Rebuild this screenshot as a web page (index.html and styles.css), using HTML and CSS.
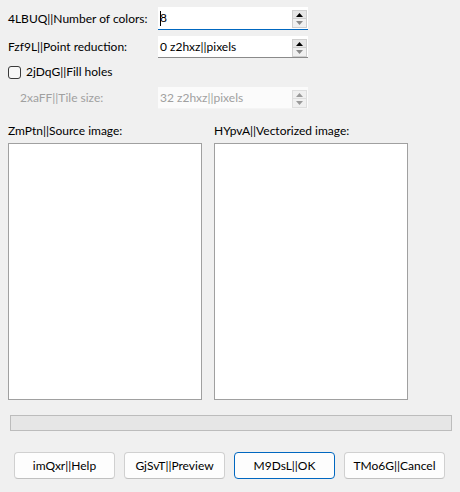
FILE: index.html
```html
<!DOCTYPE html>
<html>
<head>
<meta charset="utf-8">
<link rel="stylesheet" href="styles.css">
</head>
<body>
<div class="dialog">
  <div class="form">
    <div class="row r1">
      <span class="label">4LBUQ||Number of colors:</span>
      <div class="spin focused">
        <span class="value"><span class="caret"></span>8</span>
        <div class="arrows">
          <span class="btn up"><svg width="7" height="4" viewBox="0 0 7 4"><path d="M0 4 L3.5 0 L7 4 Z" fill="#000"/></svg></span>
          <span class="btn down"><svg width="7" height="4" viewBox="0 0 7 4"><path d="M0 0 L3.5 4 L7 0 Z" fill="#8a8a8a"/></svg></span>
        </div>
      </div>
    </div>
    <div class="row r2">
      <span class="label">Fzf9L||Point reduction:</span>
      <div class="spin">
        <span class="value">0 z2hxz||pixels</span>
        <div class="arrows">
          <span class="btn up"><svg width="7" height="4" viewBox="0 0 7 4"><path d="M0 4 L3.5 0 L7 4 Z" fill="#000"/></svg></span>
          <span class="btn down"><svg width="7" height="4" viewBox="0 0 7 4"><path d="M0 0 L3.5 4 L7 0 Z" fill="#8a8a8a"/></svg></span>
        </div>
      </div>
    </div>
    <div class="check-row">
      <span class="checkbox"></span>
      <span class="check-label">2jDqG||Fill holes</span>
    </div>
    <div class="row r4 disabled">
      <span class="label indent">2xaFF||Tile size:</span>
      <div class="spin">
        <span class="value">32 z2hxz||pixels</span>
        <div class="arrows">
          <span class="btn up"><svg width="7" height="4" viewBox="0 0 7 4"><path d="M0 4 L3.5 0 L7 4 Z" fill="#9a9a9a"/></svg></span>
          <span class="btn down"><svg width="7" height="4" viewBox="0 0 7 4"><path d="M0 0 L3.5 4 L7 0 Z" fill="#9a9a9a"/></svg></span>
        </div>
      </div>
    </div>
  </div>

  <div class="images">
    <div class="pane">
      <div class="pane-label">ZmPtn||Source image:</div>
      <div class="canvas"></div>
    </div>
    <div class="pane">
      <div class="pane-label">HYpvA||Vectorized image:</div>
      <div class="canvas"></div>
    </div>
  </div>

  <div class="progress"></div>

  <div class="buttons">
    <button class="pbtn">imQxr||Help</button>
    <button class="pbtn">GjSvT||Preview</button>
    <button class="pbtn default">M9DsL||OK</button>
    <button class="pbtn">TMo6G||Cancel</button>
  </div>
</div>
</body>
</html>
```

FILE: styles.css
```css
html, body {
  margin: 0;
  padding: 0;
  background: #f0f0f0;
}
body {
  width: 460px;
  height: 492px;
  font-family: Lato, "Open Sans", "DejaVu Sans", sans-serif;
  font-size: 12px;
  color: #000;
  overflow: hidden;
  white-space: nowrap;
}
.dialog {
  display: flex;
  flex-direction: column;
  padding-top: 7px;
}
.form {
  display: flex;
  flex-direction: column;
  padding-left: 8px;
}
.row {
  display: flex;
  align-items: center;
  height: 23px;
}
.r2 { margin-top: 6px; height: 22px; }
.r4 { margin-top: 7px; height: 22px; }
.label {
  flex-shrink: 0;
  width: 150px;
  line-height: 16px;
}
.label.indent {
  padding-left: 12px;
  width: 138px;
}
.disabled .label { color: #a0a0a0; }
.spin {
  flex-shrink: 0;
  width: 150px;
  height: 100%;
  box-sizing: border-box;
  background: #fff;
  border-bottom: 1px solid #8a8a8a;
  display: flex;
  align-items: center;
}
.spin.focused { border-bottom: 1px solid #0067c0; }
.disabled .spin {
  background: #fbfbfb;
  border-bottom: 1px solid #f4f4f4;
  color: #a0a0a0;
}
.value {
  padding-left: 2px;
  display: flex;
  align-items: center;
  flex: 1;
  line-height: 16px;
}
.caret {
  display: inline-block;
  width: 1px;
  height: 15px;
  background: #000;
  margin-right: -1px;
}
.arrows {
  display: flex;
  flex-direction: column;
  width: 15px;
  margin-right: 1px;
  align-self: flex-start;
  margin-top: 3px;
}
.btn {
  display: flex;
  align-items: center;
  justify-content: center;
  background: #e6e6e6;
  border: 1px solid #cfcfcf;
  box-sizing: content-box;
  height: 7px;
}
.btn.down {
  background: #f0f0f0;
  border-top: none;
  height: 8px;
}
.disabled .btn { background: #f0f0f0; border-color: #dedede; }
.check-row {
  display: flex;
  align-items: center;
  height: 16px;
  margin-top: 6px;
}
.checkbox {
  width: 11px;
  height: 11px;
  border: 1px solid #3a3a3a;
  border-radius: 3px;
  background: #f7f7f7;
  margin-right: 5px;
}
.check-label { line-height: 16px; }

.images {
  display: flex;
  gap: 12px;
  padding-left: 8px;
  margin-top: 14px;
}
.pane {
  display: flex;
  flex-direction: column;
  width: 194px;
}
.pane-label {
  line-height: 16px;
  height: 16px;
  margin-bottom: 4px;
}
.canvas {
  height: 257px;
  box-sizing: border-box;
  background: #fff;
  border: 1px solid #a0a0a0;
}
.progress {
  margin: 15px 0 0 10px;
  width: 442px;
  height: 16px;
  box-sizing: border-box;
  background: #e6e6e6;
  border: 1px solid #bcbcbc;
}
.buttons {
  display: flex;
  gap: 9px;
  padding-left: 14px;
  margin-top: 21px;
}
.pbtn {
  width: 101px;
  height: 27px;
  box-sizing: border-box;
  background: #fdfdfd;
  border: 1px solid #d0d0d0;
  border-bottom-color: #c0c0c0;
  border-radius: 4px;
  font-family: inherit;
  font-size: 12px;
  color: #000;
  padding: 0;
}
.pbtn.default {
  border: 1px solid #0067c0;
}
```
